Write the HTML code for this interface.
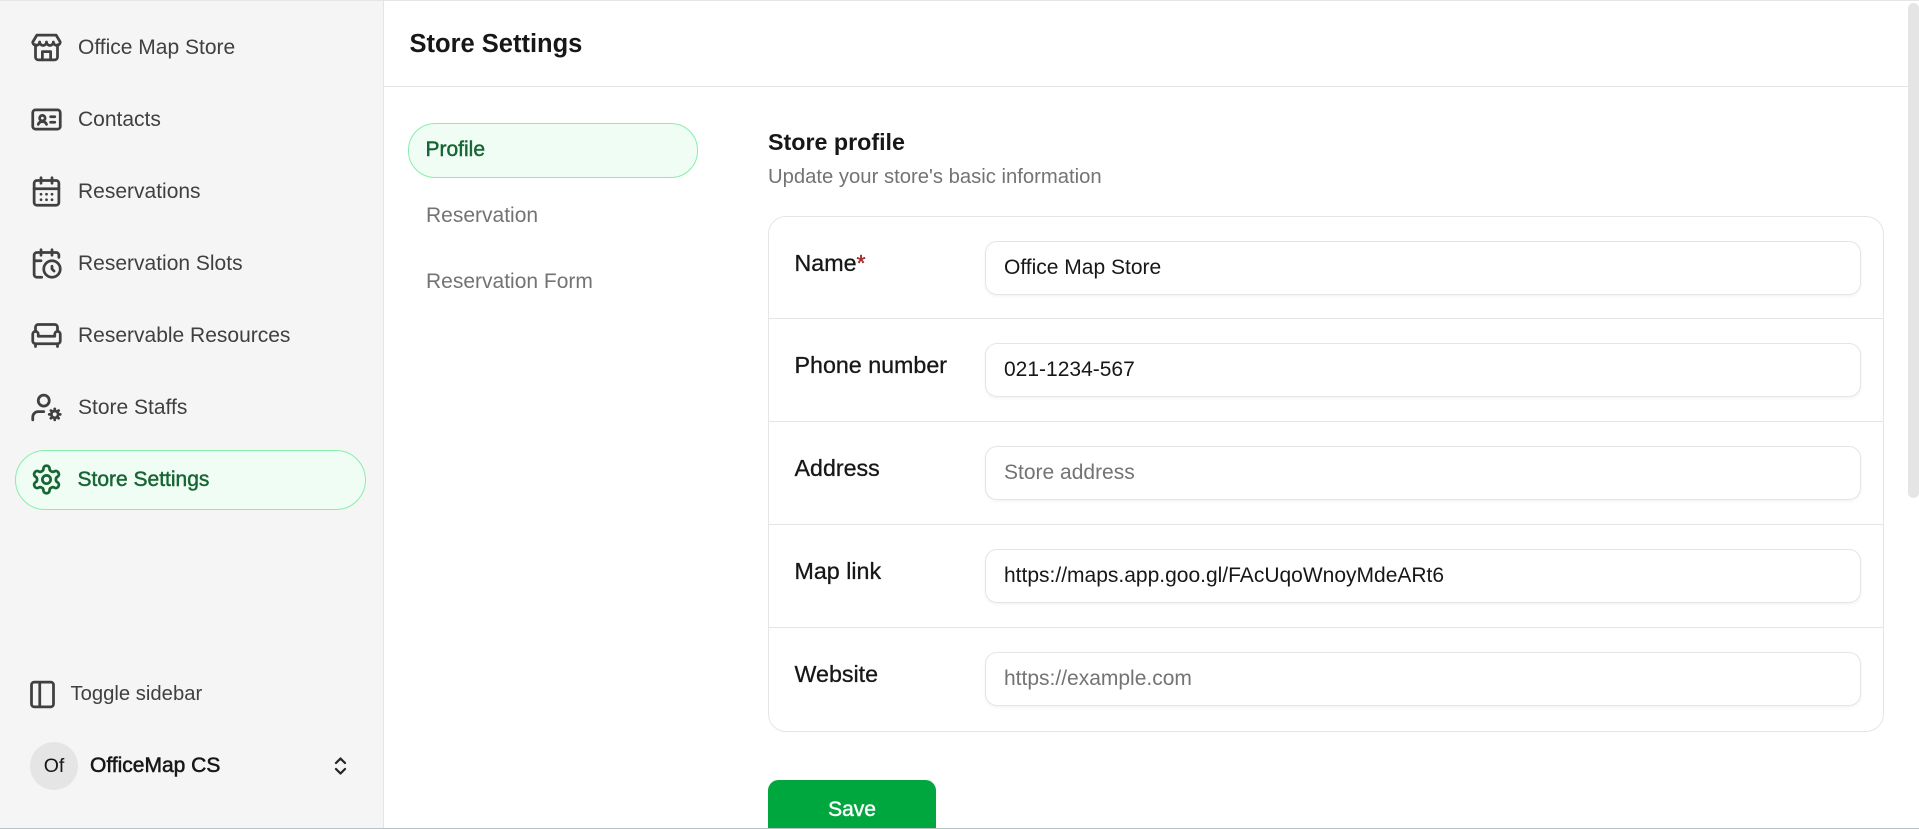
<!DOCTYPE html>
<html><head><meta charset="utf-8"><style>
*{box-sizing:border-box;margin:0;padding:0}
html,body{width:1919px;height:829px;overflow:hidden;background:#fff}
#root{zoom:1.5;width:1279.33px;height:552.67px;position:relative;font-family:"Liberation Sans",sans-serif;color:#171717;border-top:1px solid #e5e5e5;overflow:hidden}
.sb{position:absolute;left:0;top:0;width:256px;height:100%;background:#f5f5f5;border-right:1px solid #e5e5e5}
.it{position:absolute;left:10px;width:234px;height:40px;display:flex;align-items:center;padding-left:10px;font-size:14px;color:#404040}
.it svg{width:22px;height:22px;margin-right:10px;flex:none}
.it.act{background:#f0fdf4;border:1px solid #86efac;border-radius:20px;color:#166534;padding-left:9px;-webkit-text-stroke:0.3px #166534}
.main{position:absolute;left:256px;top:0;right:0;height:100%}
.hdr{height:57px;border-bottom:1px solid #e5e5e5;padding-left:17px;padding-top:2px;display:flex;align-items:center;font-size:17px;font-weight:bold}
.sub{position:absolute;left:16px;width:193px;height:37px;display:flex;align-items:center;padding-left:12px;font-size:14px;color:#737373}
.sub.act{background:#f0fdf4;border:1px solid #86efac;border-radius:18px;color:#166534;padding-left:11px;-webkit-text-stroke:0.3px #166534}
.card{position:absolute;left:256px;top:143px;width:744px;height:344px;border:1px solid #e5e5e5;border-radius:12px}
.row{height:68.6px;border-bottom:1px solid #e5e5e5;position:relative}
.row:last-child{border-bottom:none}
.lbl{position:absolute;left:17px;top:22px;font-size:15.5px;-webkit-text-stroke:0.2px #171717}
.inp{position:absolute;left:144px;top:16px;width:584px;height:36px;border:1px solid #e5e5e5;border-radius:8px;box-shadow:0 1px 2px rgba(0,0,0,.05);font-size:14px;display:flex;align-items:center;padding-left:12px}
.ph{color:#737373}
</style></head><body><div id="root">
<div class="sb">
<div class="it" style="top:11px"><svg viewBox="0 0 24 24" fill="none" stroke="#404040" stroke-width="2" stroke-linecap="round" stroke-linejoin="round"><path d="M4 10v9a2 2 0 0 0 2 2h12a2 2 0 0 0 2-2v-9"/><path d="M2 8l3-5h14l3 5c0 1.5-1.3 2.5-2.5 2.5S17 9.5 17 8c0 1.5-1.3 2.5-2.5 2.5S12 9.5 12 8c0 1.5-1.3 2.5-2.5 2.5S7 9.5 7 8c0 1.5-1.3 2.5-2.5 2.5S2 9.5 2 8z"/><path d="M9 21v-6h6v6"/></svg>Office Map Store</div>
<div class="it" style="top:59px"><svg viewBox="0 0 24 24" fill="none" stroke="#404040" stroke-width="2" stroke-linecap="round" stroke-linejoin="round"><rect x="2" y="5" width="20" height="14" rx="2"/><circle cx="9" cy="11" r="2"/><path d="M6 15.5c.5-1.5 1.6-2 3-2s2.5.5 3 2M15 10h3M15 14h3"/></svg>Contacts</div>
<div class="it" style="top:107px"><svg viewBox="0 0 24 24" fill="none" stroke="#404040" stroke-width="2" stroke-linecap="round" stroke-linejoin="round"><rect x="3" y="4" width="18" height="18" rx="2"/><path d="M8 2v4M16 2v4M3 10h18M8 14h.01M12 14h.01M16 14h.01M8 18h.01M12 18h.01M16 18h.01"/></svg>Reservations</div>
<div class="it" style="top:155px"><svg viewBox="0 0 24 24" fill="none" stroke="#404040" stroke-width="2" stroke-linecap="round" stroke-linejoin="round"><path d="M21 7.5V6a2 2 0 0 0-2-2H5a2 2 0 0 0-2 2v14a2 2 0 0 0 2 2h3.5M16 2v4M8 2v4M3 10h5"/><circle cx="16" cy="16" r="6"/><path d="M16 14v2l1.5 1.5"/></svg>Reservation Slots</div>
<div class="it" style="top:203px"><svg viewBox="0 0 24 24" fill="none" stroke="#404040" stroke-width="2" stroke-linecap="round" stroke-linejoin="round"><path d="M20 9V6a2 2 0 0 0-2-2H6a2 2 0 0 0-2 2v3"/><path d="M2 16a2 2 0 0 0 2 2h16a2 2 0 0 0 2-2v-5a2 2 0 0 0-4 0v1.5H6V11a2 2 0 0 0-4 0z"/><path d="M4 18v2M20 18v2"/></svg>Reservable Resources</div>
<div class="it" style="top:251px"><svg viewBox="0 0 24 24" fill="none" stroke="#404040" stroke-width="2" stroke-linecap="round" stroke-linejoin="round"><circle cx="10" cy="7" r="4"/><path d="M2 21v-2a4 4 0 0 1 4-4h4"/><circle cx="18" cy="17" r="2.5"/><path d="M18 13v1.5M18 19.5V21M14 17h1.5M20.5 17H22M15.2 14.2l1 1M19.8 18.8l1 1M15.2 19.8l1-1M19.8 15.2l1-1"/></svg>Store Staffs</div>
<div class="it act" style="top:299px"><svg viewBox="0 0 24 24" fill="none" stroke="#166534" stroke-width="2" stroke-linecap="round" stroke-linejoin="round"><path d="M12.22 2h-.44a2 2 0 0 0-2 2v.18a2 2 0 0 1-1 1.73l-.43.25a2 2 0 0 1-2 0l-.15-.08a2 2 0 0 0-2.73.73l-.22.38a2 2 0 0 0 .73 2.73l.15.1a2 2 0 0 1 1 1.72v.51a2 2 0 0 1-1 1.740l-.15.09a2 2 0 0 0-.73 2.73l.22.38a2 2 0 0 0 2.73.73l.15-.08a2 2 0 0 1 2 0l.43.25a2 2 0 0 1 1 1.73V20a2 2 0 0 0 2 2h.44a2 2 0 0 0 2-2v-.18a2 2 0 0 1 1-1.73l.43-.25a2 2 0 0 1 2 0l.15.08a2 2 0 0 0 2.73-.73l.22-.39a2 2 0 0 0-.73-2.73l-.15-.08a2 2 0 0 1-1-1.74v-.5a2 2 0 0 1 1-1.74l.15-.09a2 2 0 0 0 .73-2.73l-.22-.38a2 2 0 0 0-2.73-.73l-.15.08a2 2 0 0 1-2 0l-.43-.25a2 2 0 0 1-1-1.73V4a2 2 0 0 0-2-2z"/><circle cx="12" cy="12" r="3"/></svg>Store Settings</div>
<div class="it" style="top:442px;font-size:13.5px;padding-left:7px"><svg viewBox="0 0 24 24" fill="none" stroke="#404040" stroke-width="2" style="margin-right:8px"><rect x="4" y="3" width="16" height="18" rx="2"/><path d="M10 3v18"/></svg>Toggle sidebar</div>
<div style="position:absolute;left:20px;top:494px;width:32px;height:32px;border-radius:50%;background:#e5e5e5;font-size:13px;display:flex;align-items:center;justify-content:center">Of</div>
<div style="position:absolute;left:60px;top:502px;font-size:14px;-webkit-text-stroke:0.35px #171717">OfficeMap CS</div>
<svg style="position:absolute;left:220px;top:502px" width="14" height="16" viewBox="0 0 14 16" fill="none" stroke="#262626" stroke-width="1.5" stroke-linecap="round" stroke-linejoin="round"><path d="M4 6l3-3 3 3M4 10l3 3 3-3"/></svg>
</div>
<div class="main">
<div class="hdr">Store Settings</div>
<div class="sub act" style="top:81px">Profile</div>
<div class="sub" style="top:125px">Reservation</div>
<div class="sub" style="top:169px">Reservation Form</div>
<div style="position:absolute;left:256px;top:85px;font-size:15.5px;font-weight:bold">Store profile</div>
<div style="position:absolute;left:256px;top:110px;font-size:13.5px;color:#737373">Update your store's basic information</div>
<div class="card">
<div class="row"><div class="lbl">Name<span style="color:#dc2626">*</span></div><div class="inp">Office Map Store</div></div>
<div class="row"><div class="lbl">Phone number</div><div class="inp">021-1234-567</div></div>
<div class="row"><div class="lbl">Address</div><div class="inp ph">Store address</div></div>
<div class="row"><div class="lbl">Map link</div><div class="inp">https://maps.app.goo.gl/FAcUqoWnoyMdeARt6</div></div>
<div class="row"><div class="lbl">Website</div><div class="inp ph">https://example.com</div></div>
</div>
<div style="position:absolute;left:256px;top:519px;width:112px;height:40px;background:#00a63e;border-radius:7px;color:#fff;font-size:14px;-webkit-text-stroke:0.3px #fff;display:flex;align-items:center;justify-content:center">Save</div>
<div style="position:absolute;right:0;top:1px;width:7px;height:330px;background:#e5e5e5;border-radius:4px"></div>
</div>
<div style="position:absolute;left:0;bottom:0;width:100%;height:1px;background:#b8c4c4"></div>
</div></body></html>
